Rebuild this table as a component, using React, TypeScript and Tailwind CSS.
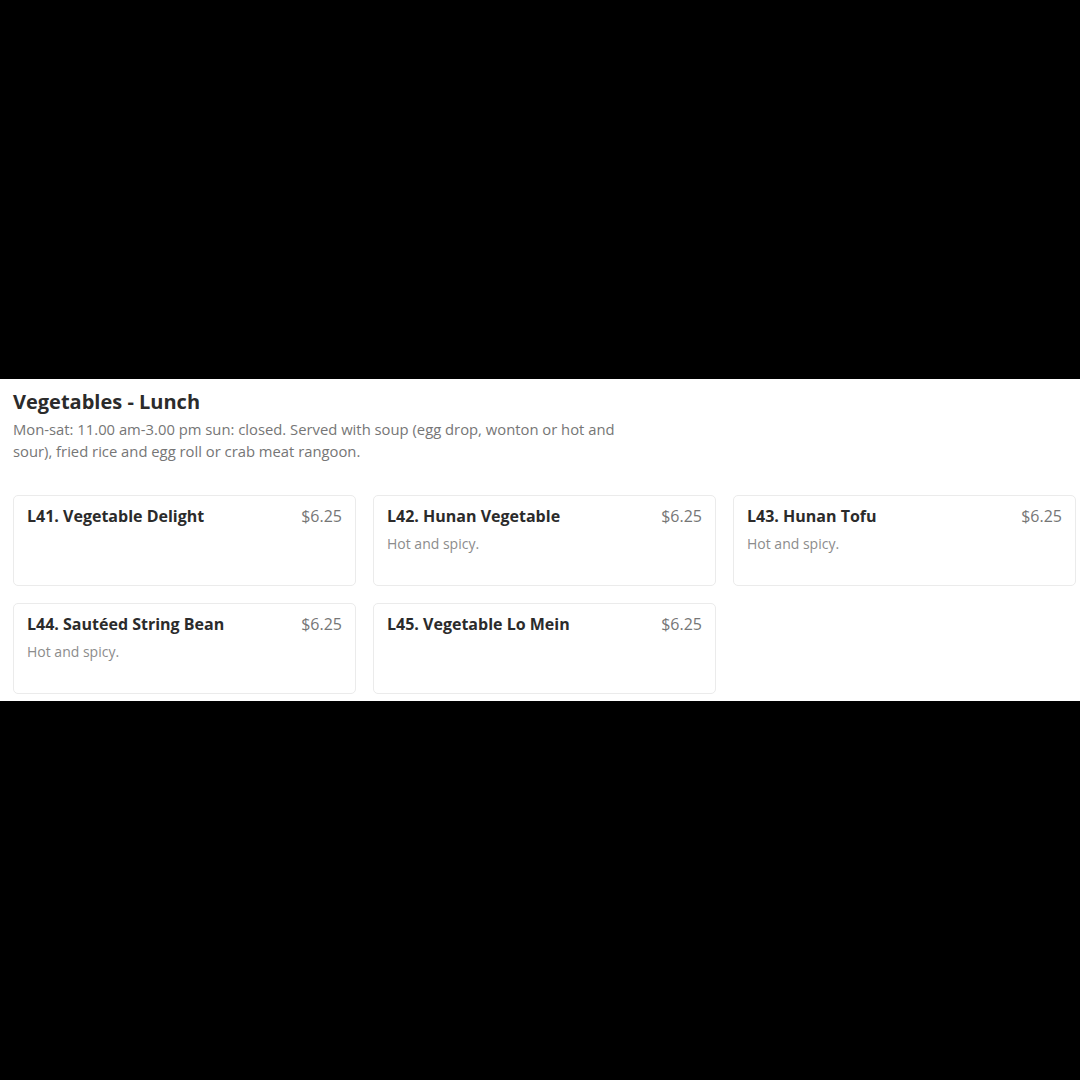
const items = [
  { name: "L41. Vegetable Delight", price: "$6.25", desc: "" },
  { name: "L42. Hunan Vegetable", price: "$6.25", desc: "Hot and spicy." },
  { name: "L43. Hunan Tofu", price: "$6.25", desc: "Hot and spicy." },
  { name: "L44. Sautéed String Bean", price: "$6.25", desc: "Hot and spicy." },
  { name: "L45. Vegetable Lo Mein", price: "$6.25", desc: "" },
];

function ItemCard({ name, price, desc }: { name: string; price: string; desc: string }) {
  return (
    <div className="h-[91px] rounded-[5px] border border-[#ebebeb] bg-white px-[13px] pt-[8px]">
      <div className="flex items-start justify-between">
        <span className="text-[16px] leading-[24px] font-bold text-[#2b2b2b]">{name}</span>
        <span className="text-[16px] leading-[24px] text-[#767676]">{price}</span>
      </div>
      {desc && <p className="mt-[6px] text-[14px] leading-[20px] text-[#8c8c8c]">{desc}</p>}
    </div>
  );
}

export default function App() {
  return (
    <div className="flex h-[1080px] w-[1080px] flex-col justify-center bg-black" style={{ fontFamily: "'Open Sans', Lato, sans-serif" }}>
      <section className="h-[322px] bg-white pl-[13px] pt-[9px]">
        <h2 className="text-[20px] leading-[28px] font-bold text-[#2b2b2b]">Vegetables - Lunch</h2>
        <p className="mt-[2px] w-[615px] text-[14.8px] leading-[22px] text-[#767676]">
          Mon-sat: 11.00 am-3.00 pm sun: closed. Served with soup (egg drop, wonton or hot and sour), fried rice and egg roll or crab meat rangoon.
        </p>
        <div className="mt-[33px] grid grid-cols-[343px_343px_343px] gap-x-[17px] gap-y-[17px]">
          {items.map((it) => (
            <ItemCard key={it.name} {...it} />
          ))}
        </div>
      </section>
    </div>
  );
}
